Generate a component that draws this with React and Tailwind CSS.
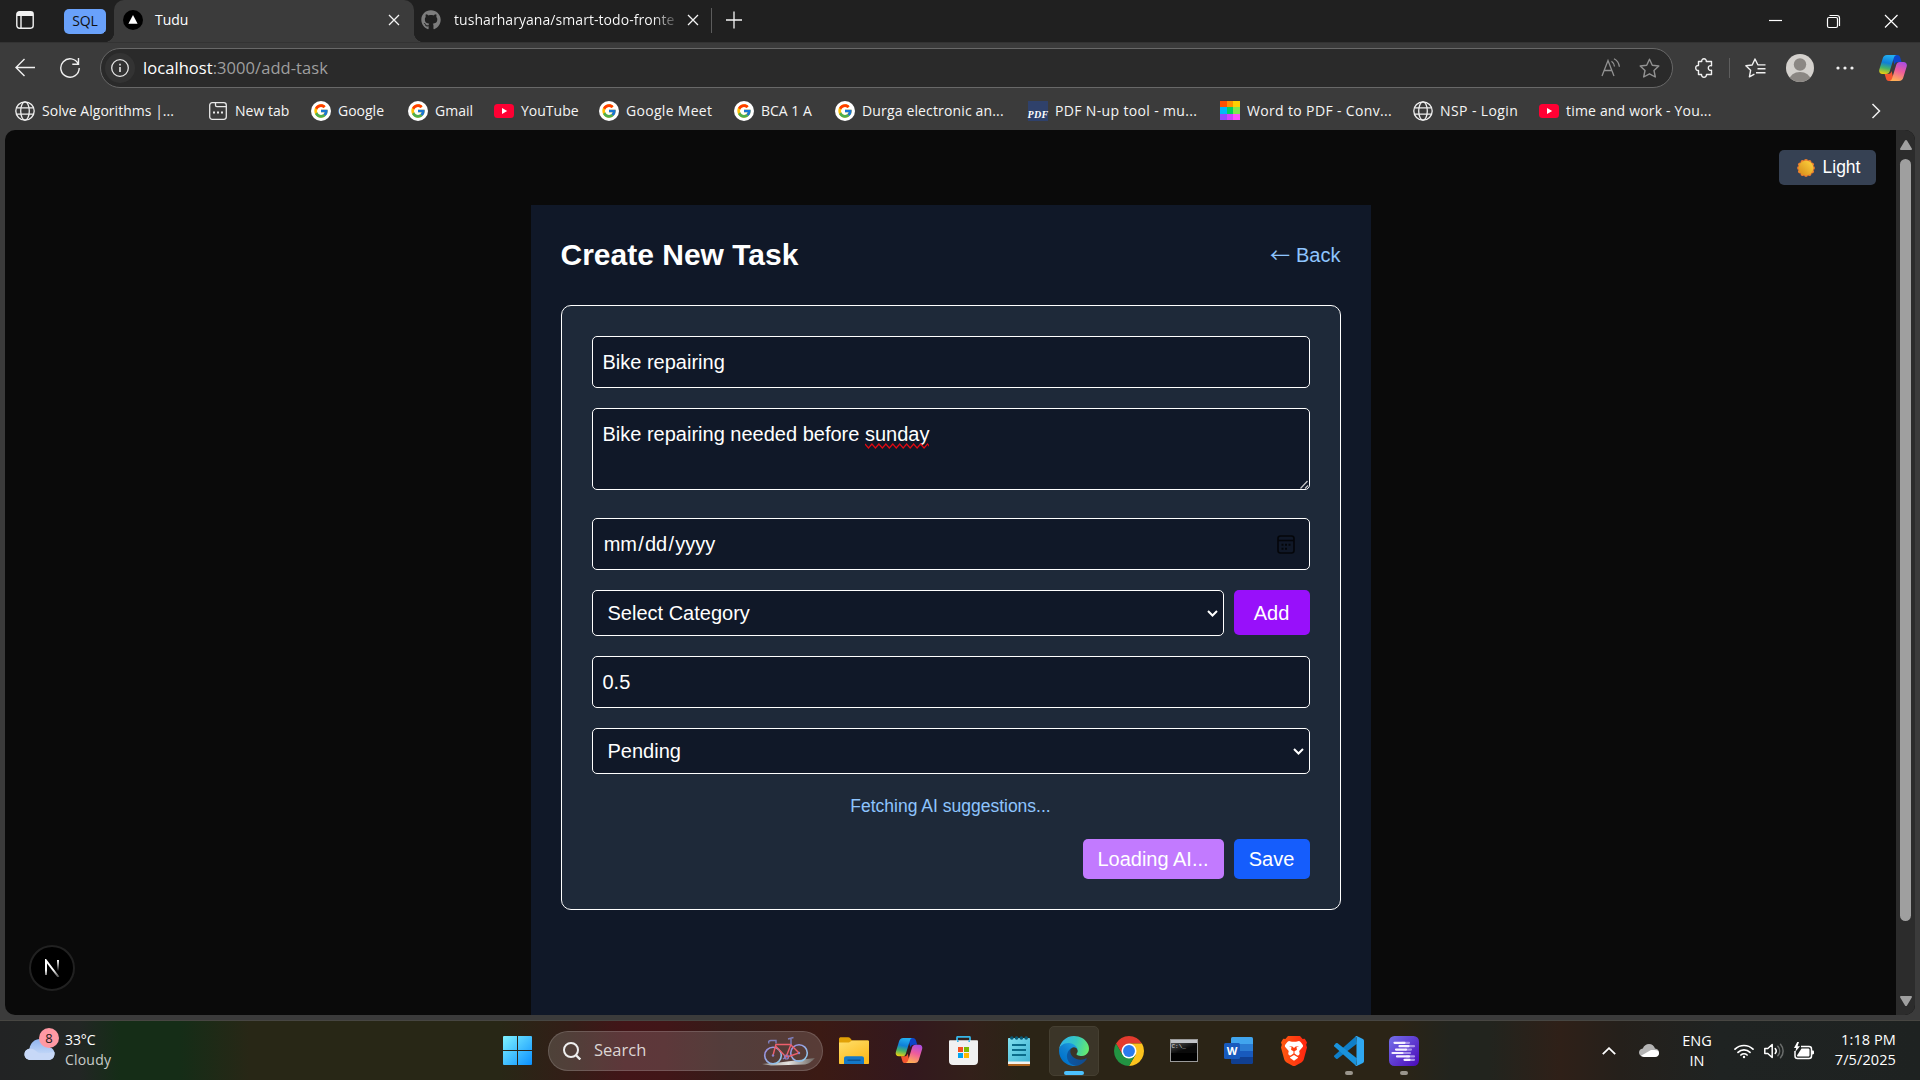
import React from "react";
import { FaGithub } from "react-icons/fa";
import { FcGoogle } from "react-icons/fc";

/* ---------- shared brand drawings ---------- */

function CopilotLogo({ id, className }) {
  return (
    <svg className={className} viewBox="0 0 28 26" fill="none">
      <defs>
        <linearGradient id={id + "a"} x1="8" y1="0" x2="4" y2="19" gradientUnits="userSpaceOnUse">
          <stop offset="0" stopColor="#22aef0" />
          <stop offset=".4" stopColor="#0f7fd8" />
          <stop offset=".68" stopColor="#45b36a" />
          <stop offset="1" stopColor="#f3cf0c" />
        </linearGradient>
        <linearGradient id={id + "b"} x1="24" y1="6" x2="17" y2="26" gradientUnits="userSpaceOnUse">
          <stop offset="0" stopColor="#a24bea" />
          <stop offset=".5" stopColor="#ee5c9c" />
          <stop offset="1" stopColor="#ffb055" />
        </linearGradient>
      </defs>
      <path d="M13 0h5.2c1.6 0 2.6 1 3 2.4L22.600 7H19c-2.200 0-3 1-3.600 3z" fill="#0d45c9" />
      <path d="M15 26H9.800c-1.600 0-2.400-1-2.800-2.400L5.600 19H9c2.200 0 3-1 3.600-3z" fill="#f4552f" />
      <path d="M8 0h9.500c-1.500.3-2.200 1.500-2.700 3l-4 13c-.6 2-1.700 3-3.800 3H3.500C.8 19-.3 17 .3 14.500L3.700 3.400C4.300 1.300 5.600 0 8 0z" fill={`url(#${id}a)`} />
      <path d="M20 26h-9.500c1.500-.3 2.200-1.500 2.700-3l4-13c.6-2 1.700-3 3.800-3h3.500c2.700 0 3.800 2 3.200 4.500l-3.400 11.100C23.700 24.700 22.400 26 20 26z" fill={`url(#${id}b)`} />
    </svg>
  );
}

function GoogleIcon() {
  return (
    <span className="flex size-5 items-center justify-center rounded-full bg-white">
      <FcGoogle size={16} />
    </span>
  );
}

function GlobeIcon() {
  return (
    <svg className="size-5" viewBox="0 0 20 20" fill="none" stroke="#f0f0f0" strokeWidth="1.300">
      <circle cx="10" cy="10" r="9.200" />
      <ellipse cx="10" cy="10" rx="4.300" ry="9.200" />
      <path d="M1.600 6.800h16.800M1.600 13.200h16.800" />
    </svg>
  );
}

function NewTabIcon() {
  return (
    <svg className="size-5" viewBox="0 0 20 20" fill="none" stroke="#e8e8e8" strokeWidth="1.300">
      <rect x="1.700" y="1.700" width="16.600" height="16.600" rx="2.500" />
      <path d="M7.500 1.700v2.600c0 .9.500 1.400 1.400 1.400h9.400" />
      <path d="M5 11.500h2M9 11.500h2M13 11.500h2" strokeWidth="2" />
    </svg>
  );
}

function YouTubeIcon() {
  return (
    <span className="flex h-5 w-5 items-center">
      <svg className="h-3.5 w-5" viewBox="0 0 20 14">
        <rect width="20" height="14" rx="3.500" fill="#ff0033" />
        <path d="M8 4l5.200 3L8 10z" fill="#fff" />
      </svg>
    </span>
  );
}

function PdfIcon() {
  return (
    <span className="flex size-5 items-end justify-center bg-[#2f416b] font-['Liberation_Serif',serif] text-[10px] leading-[12px] font-bold text-white italic">
      PDF
    </span>
  );
}

function RainbowIcon() {
  return (
    <span className="grid size-5 grid-cols-3 grid-rows-3">
      <i className="bg-[#ff5000]" /><i className="bg-[#ff9000]" /><i className="bg-[#ffd000]" />
      <i className="bg-[#00b8f8]" /><i className="bg-[#00d060]" /><i className="bg-[#80e850]" />
      <i className="bg-[#9048ff]" /><i className="bg-[#d040ff]" /><i className="bg-[#ff50ff]" />
    </span>
  );
}

/* ---------- browser chrome ---------- */

function CloseGlyph({ className }) {
  return (
    <svg className={className} viewBox="0 0 12 12" stroke="#f5f5f5" strokeWidth="1.300">
      <path d="M1 1l10 10M11 1L1 11" />
    </svg>
  );
}

function TabStrip() {
  return (
    <div className="flex h-[42px] items-stretch bg-[#202020] text-white">
      <div className="flex w-[114px] items-center rounded-br-[10px] bg-[#202020] pb-[2px]">
        <svg className="ml-4 h-[18px] w-[18px]" viewBox="0 0 18 18" fill="none" stroke="#f2f2f2" strokeWidth="1.400">
          <rect x=".8" y=".8" width="16.400" height="16.400" rx="2.600" />
          <path d="M1 3h16" strokeWidth="4" />
          <path d="M5 4v13" />
        </svg>
        <span className="mt-[2px] ml-[30px] flex h-[25px] w-[42px] items-center justify-center rounded-[5px] bg-[#69a1fa] pb-px text-[14px] tracking-[-0.2px] text-[#101010]">
          SQL
        </span>
      </div>
      <div className="relative flex w-[300px] items-center rounded-t-[10px] bg-[#3b3b3b] pb-[2px]">
        <span className="absolute bottom-0 -left-2.5 size-2.5 bg-[radial-gradient(circle_at_0_0,#202020_10px,#3b3b3b_10.5px)]" />
        <span className="absolute -right-2.5 bottom-0 size-2.5 bg-[radial-gradient(circle_at_100%_0,#202020_10px,#3b3b3b_10.5px)]" />
        <svg className="ml-[9px] size-5" viewBox="0 0 20 20">
          <circle cx="10" cy="10" r="10" fill="#000" />
          <path d="M10 5l4.600 8.800H5.400z" fill="#fff" />
        </svg>
        <span className="ml-3 flex-1 text-[14px] leading-5">Tudu</span>
        <CloseGlyph className="mr-[14px] size-3" />
      </div>
      <div className="flex w-[298px] items-center pb-[2px]">
        <FaGithub className="ml-[7px]" size={20} color="#7d7d7d" />
        <span className="ml-[13px] w-[224px] bg-[linear-gradient(90deg,#fff_198px,#3a3a3a_224px)] bg-clip-text text-[14px] leading-5 tracking-[0.060px] whitespace-nowrap text-transparent">
          tusharharyana/smart-todo-fronte
        </span>
        <CloseGlyph className="ml-[9px] size-3" />
        <span className="ml-[12px] h-[25px] w-px bg-[#5c5c5c]" />
      </div>
      <svg className="ml-[14px] w-4" viewBox="0 0 16 42" stroke="#f5f5f5" strokeWidth="1.300">
        <path d="M8 11.500v17M-.5 20h17" />
      </svg>
      <div className="ml-auto flex items-center">
        <svg className="h-[42px] w-[174px]" viewBox="0 0 174 42" fill="none" stroke="#fff" strokeWidth="1.200">
          <path d="M23 20.500h13" />
          <rect x="81.500" y="17.500" width="10" height="10" rx="1.500" />
          <path d="M83.500 15.500h7.500c1.500 0 2.500 1 2.500 2.500v8" />
          <path d="M139 15l12.500 12.500M151.500 15L139 27.500" />
        </svg>
      </div>
    </div>
  );
}

function AddressRow() {
  return (
    <div className="flex h-[52px] items-center border-t border-[#333] pb-px text-white">
      <svg className="ml-[15px] size-5" viewBox="0 0 20 20" fill="none" stroke="#f0f0f0" strokeWidth="1.400">
        <path d="M20 9.500H1M9.500 1L1 9.500 9.500 18" />
      </svg>
      <svg className="ml-[25px] size-5" viewBox="0 0 20 20" fill="none" stroke="#f0f0f0" strokeWidth="1.400">
        <path d="M18.300 6A9.200 9.200 0 1 0 19.200 10M18.500 0v6.200h-6.200" />
      </svg>
      <div className="ml-[20px] flex h-10 w-[1573px] items-center rounded-full border border-[#686868] bg-[#2a2a2a]">
        <span className="ml-[4px] flex size-[30px] items-center justify-center rounded-full bg-[#333]">
          <svg className="size-[18px]" viewBox="0 0 18 18" fill="none" stroke="#e6e6e6" strokeWidth="1.300">
            <circle cx="9" cy="9" r="8.300" />
            <path d="M9 8v5M9 4.800v1.600" strokeWidth="1.600" />
          </svg>
        </span>
        <span className="ml-2 flex-1 text-[16.500px] leading-6 tracking-[0.060px] text-[#9f9f9f]">
          <span className="text-white">localhost</span>:3000/add-task
        </span>
        <svg className="h-5 w-5" viewBox="0 0 20 20" fill="none" stroke="#929292" strokeWidth="1.300">
          <path d="M1 18L7 2.500 13 18M3.200 12.500h7.700M10.500 3.200c1.800 1.200 2.800 3 3 5.300M13 .8c3 1.600 5 4.500 5.400 8" />
        </svg>
        <svg className="mr-3 ml-[18px] size-[21px]" viewBox="0 0 21 21" fill="none" stroke="#929292" strokeWidth="1.400" strokeLinejoin="round">
          <path d="M10.500 1.200l2.800 6 6.500.8-4.800 4.500 1.300 6.500-5.800-3.200L4.700 19 6 12.500 1.200 8l6.500-.8z" />
        </svg>
      </div>
      <svg className="ml-[21px] h-5 w-5" viewBox="0 0 20 20" fill="none" stroke="#f0f0f0" strokeWidth="1.400" strokeLinejoin="round">
        <path d="M4.500 3.500h3.200C7.500 2 8.500.8 10 .8s2.500 1.200 2.300 2.700h5.200v4.300c-1.700-.6-3.200.5-3.200 2.200s1.500 2.800 3.200 2.200v4.300h-5c.1 1.600-1 2.700-2.500 2.700s-2.600-1.100-2.500-2.700h-3v-4c-1.600.2-2.800-.9-2.800-2.500S2.900 7.300 4.500 7.500z" />
      </svg>
      <span className="ml-[14.500px] h-5 w-px bg-[#5e5e5e]" />
      <svg className="ml-[15px] h-5 w-[21px]" viewBox="0 0 21 20" fill="none" stroke="#f0f0f0" strokeWidth="1.400" strokeLinejoin="round">
        <path d="M14.200 6.900L12.800 6.800 10 1 7.200 7 .9 7.800l4.700 4.500L4.400 18.900l5-2.700M12.500 10.700h8M11 14.700h9.500M13 6.900h7.500" />
      </svg>
      <svg className="ml-[20px] size-7" viewBox="0 0 28 28">
        <defs><clipPath id="avatarClip"><circle cx="14" cy="14" r="14" /></clipPath></defs>
        <circle cx="14" cy="14" r="14" fill="#d4d1cd" />
        <g clipPath="url(#avatarClip)" fill="#8b8783">
          <circle cx="14" cy="10.500" r="6.200" />
          <ellipse cx="14" cy="26" rx="10.500" ry="8" />
        </g>
      </svg>
      <svg className="ml-[22px] h-1 w-[18px]" viewBox="0 0 18 4" fill="#f0f0f0">
        <circle cx="2" cy="2" r="1.600" /><circle cx="9" cy="2" r="1.600" /><circle cx="16" cy="2" r="1.600" />
      </svg>
      <CopilotLogo id="cpTop" className="ml-[25px] h-[26px] w-7" />
    </div>
  );
}

function Bookmark({ width, icon, children, tracking = "" }) {
  return (
    <div className={`flex shrink-0 items-center gap-[7px] whitespace-nowrap ${width} ${tracking}`}>
      {icon}
      <span>{children}</span>
    </div>
  );
}

function BookmarksBar() {
  return (
    <div className="flex h-9 items-center pb-[3px] pl-[15px] text-[14px] leading-5 text-[#f5f5f5]">
      <Bookmark width="w-[193px]" icon={<GlobeIcon />} tracking="tracking-[0.030px]">Solve Algorithms |...</Bookmark>
      <Bookmark width="w-[103px]" icon={<NewTabIcon />}>New tab</Bookmark>
      <Bookmark width="w-[97px]" icon={<GoogleIcon />}>Google</Bookmark>
      <Bookmark width="w-[86px]" icon={<GoogleIcon />}>Gmail</Bookmark>
      <Bookmark width="w-[105px]" icon={<YouTubeIcon />}>YouTube</Bookmark>
      <Bookmark width="w-[135px]" icon={<GoogleIcon />} tracking="tracking-[0.3px]">Google Meet</Bookmark>
      <Bookmark width="w-[101px]" icon={<GoogleIcon />}>BCA 1 A</Bookmark>
      <Bookmark width="w-[193px]" icon={<GoogleIcon />} tracking="tracking-[0.15px]">Durga electronic an...</Bookmark>
      <Bookmark width="w-[192px]" icon={<PdfIcon />} tracking="tracking-[0.35px]">PDF N-up tool - mu...</Bookmark>
      <Bookmark width="w-[193px]" icon={<RainbowIcon />} tracking="tracking-[0.35px]">Word to PDF - Conv...</Bookmark>
      <Bookmark width="w-[126px]" icon={<GlobeIcon />} tracking="tracking-[0.4px]">NSP - Login</Bookmark>
      <Bookmark width="w-[200px]" icon={<YouTubeIcon />} tracking="tracking-[0.18px]">time and work - You...</Bookmark>
      <svg className="mr-[39px] ml-auto h-4 w-[10px]" viewBox="0 0 10 16" fill="none" stroke="#f0f0f0" strokeWidth="1.500">
        <path d="M1.500 1l7 7-7 7" />
      </svg>
    </div>
  );
}

/* ---------- page ---------- */

function SelectChevron() {
  return (
    <svg className="h-[7px] w-[11px]" viewBox="0 0 11 7" fill="none" stroke="#fff" strokeWidth="2">
      <path d="M1 1l4.500 4.500L10 1" />
    </svg>
  );
}

function SunEmoji() {
  const petals = Array.from({ length: 12 }, (_, i) => (i * Math.PI) / 6);
  return (
    <svg className="size-[18px]" viewBox="0 0 18 18">
      <defs>
        <linearGradient id="sun" x1="0" y1="1" x2="1" y2="0">
          <stop offset="0" stopColor="#d68a18" /><stop offset="1" stopColor="#ffd640" />
        </linearGradient>
      </defs>
      {petals.map((a) => (
        <circle key={a} cx={9 + 6.8 * Math.cos(a)} cy={9 + 6.8 * Math.sin(a)} r="2.100" fill="#f0802c" />
      ))}
      <circle cx="9" cy="9" r="7.300" fill="url(#sun)" />
    </svg>
  );
}

function TaskForm() {
  const field = "flex w-full items-center rounded-[5px] border border-white bg-gray-900";
  return (
    <div className="flex flex-col rounded-[10px] border border-white bg-gray-800 p-[30px]">
      <div className={`${field} h-[52px] px-[10px]`}>Bike repairing</div>
      <div className="relative mt-5 h-[82px] w-full rounded-[5px] border border-white bg-gray-900 px-[10px] py-[10px] leading-[30px]">
        Bike repairing needed before{" "}
        <span className="relative inline-block">
          sunday
          <svg className="absolute top-[24px] left-0 h-[6px] w-full" viewBox="0 0 65 6" preserveAspectRatio="none" fill="none" stroke="#e00a12" strokeWidth="1.200">
            <path d="M0 1l3.500 4L7 1l3.500 4L14 1l3.500 4L21 1l3.500 4L28 1l3.500 4L35 1l3.500 4L42 1l3.500 4L49 1l3.500 4L56 1l3.500 4L63 1l2 2.500" />
          </svg>
        </span>
        <svg className="absolute right-0 bottom-0 size-[9px]" viewBox="0 0 9 9" stroke="#c8c8c8" strokeWidth="1.200">
          <path d="M.5 8.500l7-7.500M5 8.500L8 5.500" />
        </svg>
      </div>
      <div className={`${field} mt-7 h-[52px] justify-between pr-[14px] pl-[10px]`}>
        <span className="flex">
          <span className="px-[1.200px]">mm</span>/<span className="px-[1.200px]">dd</span>/<span className="px-[1.200px]">yyyy</span>
        </span>
        <svg className="h-[19px] w-[18px]" viewBox="0 0 18 19" fill="none" stroke="#04060a" strokeWidth="1.600">
          <rect x="1" y="1" width="16" height="17" rx="2.500" />
          <path d="M1 5.500h16" />
          <path d="M4.500 9.800h2M8 9.800h2M11.500 9.800h2M4.500 13.800h2M8 13.800h2" strokeWidth="2" />
        </svg>
      </div>
      <div className="mt-5 flex gap-[10px]">
        <div className={`${field} h-[46px] flex-1 justify-between pr-[5px] pl-[15px]`}>
          Select Category
          <SelectChevron />
        </div>
        <button className="h-[45px] w-[76px] rounded-[5px] bg-purple-600">Add</button>
      </div>
      <div className={`${field} mt-5 h-[52px] px-[10px]`}>0.5</div>
      <div className={`${field} mt-5 h-[46px] justify-between pr-[5px] pl-[15px]`}>
        Pending
        <SelectChevron />
      </div>
      <p className="mt-5 text-center text-[17.500px] leading-[25px] text-blue-300">Fetching AI suggestions...</p>
      <div className="mt-5 flex justify-end gap-[10px]">
        <button className="h-10 w-[141px] rounded-[5px] bg-purple-400">Loading AI...</button>
        <button className="h-10 w-[76px] rounded-[5px] bg-blue-600">Save</button>
      </div>
    </div>
  );
}

function Viewport() {
  return (
    <div className="mr-[5px] ml-[5px] flex h-[885px] overflow-hidden rounded-[10px] bg-[#0a0a0a] font-['Liberation_Sans',Arial,sans-serif]">
      <div className="relative flex flex-1 justify-center">
        <main className="mt-[75px] w-[840px] bg-gray-900 p-[30px] text-[20px] leading-[30px] text-white">
          <div className="mb-[30px] flex h-10 items-center justify-between">
            <h1 className="text-[30px] leading-[38px] font-bold">Create New Task</h1>
            <a className="flex h-[30px] items-center gap-[6px] text-blue-300">
              <span className="font-['Noto_Sans_CJK_JP',sans-serif] leading-[30px]">←</span>
              <span>Back</span>
            </a>
          </div>
          <TaskForm />
        </main>
        <button className="absolute top-5 right-5 flex h-[35px] w-[97px] items-center justify-center gap-[8px] rounded-[5px] bg-gray-700 pl-[2px] text-[17.500px] text-white">
          <SunEmoji />
          Light
        </button>
        <div className="absolute bottom-[24px] left-[24px] flex size-[46px] items-center justify-center rounded-full border-2 border-[#212121] bg-black">
          <svg className="h-[18px] w-4" viewBox="0 0 16 18" fill="none" strokeWidth="2">
            <defs>
              <linearGradient id="nDiag" x1="0" y1="0" x2="0" y2="18" gradientUnits="userSpaceOnUse">
                <stop offset=".6" stopColor="#fff" /><stop offset="1" stopColor="#fff" stopOpacity=".3" />
              </linearGradient>
              <linearGradient id="nStem" x1="0" y1="1" x2="0" y2="12" gradientUnits="userSpaceOnUse">
                <stop offset="0" stopColor="#fff" /><stop offset="1" stopColor="#fff" stopOpacity="0" />
              </linearGradient>
            </defs>
            <path d="M2 16V1.500L14.500 18" stroke="url(#nDiag)" />
            <path d="M13 1h2v11h-2z" fill="url(#nStem)" />
          </svg>
        </div>
      </div>
      <div className="flex w-[19px] flex-col items-center bg-[#2c2c2c]">
        <svg className="mt-[10px] h-[10px] w-3" viewBox="0 0 12 10" fill="#9f9f9f"><path d="M6 0c.5 0 .8.200 1 .6l4.800 8c.4.800.100 1.400-.8 1.400H1c-.9 0-1.200-.6-.8-1.400L5 .6c.2-.4.5-.6 1-.6z" /></svg>
        <span className="mt-[9px] h-[762px] w-[11px] rounded-full bg-[#9f9f9f]" />
        <svg className="mt-auto mb-[9px] h-[10px] w-3" viewBox="0 0 12 10" fill="#9f9f9f"><path d="M6 10c.5 0 .8-.2 1-.6l4.800-8C12.200.6 11.900 0 11 0H1C.1 0-.2.600.2 1.400l4.800 8c.2.400.5.600 1 .600z" /></svg>
      </div>
    </div>
  );
}

/* ---------- taskbar icons ---------- */

function Bicycle() {
  return (
    <svg className="h-[32px] w-[54px]" viewBox="0 0 54 32" fill="none">
      <defs>
        <linearGradient id="road" x1="0" x2="1"><stop offset="0" stopColor="#9a9590" /><stop offset=".5" stopColor="#e4e2df" /><stop offset="1" stopColor="#6b6460" /></linearGradient>
        <linearGradient id="wheel" x1="0" y1="0" x2="1" y2="1"><stop offset="0" stopColor="#9a86dc" /><stop offset="1" stopColor="#8fd0ee" /></linearGradient>
      </defs>
      <path d="M0 29l17-1.500L53 23c-3 3-5 5.500-10 6.500L9 30.500z" fill="url(#road)" />
      <circle cx="11" cy="20.500" r="8.300" stroke="url(#wheel)" strokeWidth="1.600" />
      <circle cx="37" cy="18" r="8.300" stroke="url(#wheel)" strokeWidth="1.600" />
      <path d="M11 20.500l3-11.500M13.500 11L24 22l5-12.500H14M29 10l8 8-12 4" stroke="#ee5f6c" strokeWidth="1.400" />
      <path d="M7 8.500c-1-2 0-3 2-3h5v3M29 9.500V3M26 4l5.500-1.500M24 22l-3 2" stroke="#7f80bd" strokeWidth="1.400" />
      <circle cx="24.500" cy="22" r="2" stroke="#8b80c8" strokeWidth="1.200" />
      <circle cx="11" cy="20.500" r="1.200" fill="#8b80c8" />
      <circle cx="37" cy="18" r="1.200" fill="#8b80c8" />
    </svg>
  );
}

function ExplorerIcon() {
  return (
    <svg className="h-[27px] w-[30px]" viewBox="0 0 30 27">
      <defs><linearGradient id="fold" x1="0" y1="0" x2=".6" y2="1"><stop offset="0" stopColor="#ffdf6b" /><stop offset="1" stopColor="#fdbb1e" /></linearGradient></defs>
      <path d="M0 2C0 .9.900.300 2 .300h7c1 0 1.800.4 2.500 1.200L13 3.400h15c1.200 0 2 .6 2 1.800V10H0z" fill="#e2a106" />
      <path d="M0 5.500h10l3-2.100h16c.6 0 1 .4 1 1V26c0 .6-.4 1-1 1H1c-.6 0-1-.4-1-1z" fill="url(#fold)" />
      <path d="M5 27v-5.500c0-1.300.9-2.200 2.200-2.200h15.600c1.300 0 2.200.9 2.200 2.200V27z" fill="#1478c8" />
      <path d="M8.500 23.200h13" stroke="#0b4e8a" strokeWidth="1.300" />
    </svg>
  );
}

function StoreIcon() {
  return (
    <svg className="h-[29px] w-[29px]" viewBox="0 0 29 29">
      <path d="M8 7V1.800C8 1.200 8.400.800 9 .800h11c.6 0 1 .4 1 1V7" stroke="#37b6e8" strokeWidth="1.800" fill="none" />
      <path d="M0 5.500C0 4.700.400 4.300 1.200 4.300h26.600c.8 0 1.200.4 1.200 1.200V25c0 2.500-1.500 4-4 4H4c-2.500 0-4-1.500-4-4z" fill="#f1f1f1" />
      <path d="M8 6V4.300h1.600V6M19.400 6V4.300H21V6" fill="#37b6e8" />
      <path d="M9 11h5v5H9z" fill="#f25022" /><path d="M15 11h5v5h-5z" fill="#7fba00" />
      <path d="M9 17h5v5H9z" fill="#00a4ef" /><path d="M15 17h5v5h-5z" fill="#ffb900" />
    </svg>
  );
}

function NotepadIcon() {
  return (
    <svg className="h-[30px] w-[22px]" viewBox="0 0 22 30">
      <defs><linearGradient id="note" x1="0" y1="0" x2="1" y2="1"><stop offset="0" stopColor="#7fe0ef" /><stop offset="1" stopColor="#3fb2d2" /></linearGradient></defs>
      <path d="M0 26h22v3c0 .6-.4 1-1 1H1c-.6 0-1-.4-1-1z" fill="#b0651e" />
      <path d="M0 3c0-.6.4-1 1-1h20c.6 0 1 .4 1 1v24H0z" fill="url(#note)" />
      <path d="M0 25.500h22V28H0z" fill="#f5f2ee" />
      <path d="M4 9h14M4 14h14M4 19h14" stroke="#0a6c8a" strokeWidth="1.800" />
      <g fill="#0a5a75"><circle cx="3.800" cy="2" r="1.800" /><circle cx="8.600" cy="2" r="1.800" /><circle cx="13.400" cy="2" r="1.800" /><circle cx="18.200" cy="2" r="1.800" /></g>
    </svg>
  );
}

function EdgeIcon() {
  return (
    <svg className="size-[30px]" viewBox="0 0 256 256">
      <defs>
        <linearGradient id="e1" x1="63" y1="177" x2="241" y2="177" gradientUnits="userSpaceOnUse"><stop offset="0" stopColor="#0c59a4" /><stop offset="1" stopColor="#114a8b" /></linearGradient>
        <linearGradient id="e2" x1="157" y1="95" x2="46" y2="222" gradientUnits="userSpaceOnUse"><stop offset="0" stopColor="#1b9de2" /><stop offset=".5" stopColor="#1080d0" /><stop offset="1" stopColor="#0074cc" /></linearGradient>
        <linearGradient id="e3" x1="20" y1="60" x2="250" y2="130" gradientUnits="userSpaceOnUse"><stop offset="0" stopColor="#2fb5e8" /><stop offset=".5" stopColor="#36c7c0" /><stop offset="1" stopColor="#66eb6e" /></linearGradient>
      </defs>
      <g transform="translate(-4.630 -4.920)">
        <path fill="url(#e1)" d="M235.680 195.460a93.730 93.730 0 0 1-10.540 4.710 101.870 101.870 0 0 1-35.900 6.460c-47.320 0-88.540-32.550-88.540-74.320A31.480 31.480 0 0 1 117.130 105c-42.800 1.800-53.800 46.400-53.800 72.530 0 73.880 68.090 81.370 82.760 81.370 7.910 0 19.840-2.300 27-4.560l1.310-.44a128.340 128.340 0 0 0 66.600-52.800 4 4 0 0 0-5.320-5.640z" />
        <path fill="url(#e2)" d="M110.340 246.340A79.200 79.200 0 0 1 87.600 225a80.720 80.720 0 0 1 29.530-120c3.120-1.470 8.450-4.130 15.540-4a32.350 32.350 0 0 1 25.690 13 31.880 31.880 0 0 1 6.360 18.660c0-.21 24.460-79.600-80-79.600-43.900 0-80 41.660-80 78.210a130.150 130.150 0 0 0 12.110 56 128 128 0 0 0 156.380 67.110 75.550 75.550 0 0 1-62.780-8z" />
        <path fill="url(#e3)" d="M156.940 153.780c-.81 1.050-3.300 2.500-3.300 5.660 0 2.610 1.700 5.120 4.720 7.230 14.380 10 41.490 8.680 41.560 8.680a59.560 59.560 0 0 0 30.270-8.350 61.380 61.380 0 0 0 30.430-52.880c.26-22.410-8-37.310-11.340-43.910C228.090 28.760 182.350 4.920 132.610 4.920a128 128 0 0 0-128 126.200c.48-36.540 36.800-66.050 80-66.050 3.500 0 23.460.34 42 10.070 16.340 8.580 24.900 18.940 30.850 29.210 6.180 10.670 7.280 24.150 7.280 29.520s-2.740 13.330-7.800 19.910z" />
      </g>
    </svg>
  );
}

function ChromeIcon() {
  return (
    <svg className="size-[30px]" viewBox="0 0 48 48">
      <path d="M24 12h20.780A24 24 0 0 0 3.220 12L13.600 30z" fill="#e33b2e" />
      <path d="M34.390 30L24 48A24 24 0 0 0 44.780 12H24z" fill="#fcc31e" />
      <path d="M13.610 30L3.220 12A24 24 0 0 0 24 48l10.390-18z" fill="#229342" />
      <circle cx="24" cy="24" r="12" fill="#fff" />
      <circle cx="24" cy="24" r="9.500" fill="#2a7bee" />
    </svg>
  );
}

function TerminalIcon() {
  return (
    <span className="flex h-[23px] w-[28px] flex-col border border-[#9a9a9a] bg-black">
      <span className="h-[3px] bg-[#c2c4c8]" />
      <span className="h-[10px] bg-linear-to-br from-[#555] to-[#0a0a0a] to-60% pl-px font-['Liberation_Mono',monospace] text-[6px] leading-[7px] text-[#ddd]">C:\_</span>
    </span>
  );
}

function WordIcon() {
  return (
    <span className="relative flex h-[27px] w-[29px] justify-end">
      <span className="flex h-full w-[22px] flex-col overflow-hidden rounded-[1.500px]">
        <i className="flex-1 bg-[#41a5ee]" /><i className="flex-1 bg-[#2b7cd3]" /><i className="flex-1 bg-[#185abd]" /><i className="flex-1 bg-[#103f91]" />
      </span>
      <span className="absolute top-[6px] left-0 flex size-[16px] items-center justify-center rounded-[1.500px] bg-[#185abd] text-[11px] font-bold text-white">W</span>
    </span>
  );
}

function BraveIcon() {
  return (
    <svg className="h-[30px] w-[26px]" viewBox="0 0 26 30">
      <defs><linearGradient id="brv" x1="0" x2="1"><stop offset="0" stopColor="#ff5a10" /><stop offset="1" stopColor="#ff2410" /></linearGradient></defs>
      <path d="M7 0h12l2.600 3 2.200-.2L26 6.500l-.8 2.300.8 2.700-3.200 11.800c-.4 1.400-1.200 2.400-2.400 3.200l-6 3.200c-.9.5-1.900.5-2.800 0l-6-3.200c-1.200-.8-2-1.800-2.400-3.200L0 11.500l.8-2.700L0 6.500l2.200-3.700 2.200.2z" fill="url(#brv)" />
      <path d="M8 5l3 .7h4L18 5c1 0 3.500 3.200 4 4.400.2 1-.4 1.600-1 2.400l-2.600 3c-.3.400-.2.900 0 1.400.4 1 .3 2-.5 2.800-.7.600-1.400.7-2 .3L13.500 17.500v-2.200l2.200-1.200c.3-.2.3-.6.100-1l-.3-1.800 2.700-1-3.500.2L13 12l-1.700-1.500-3.500-.2 2.700 1-.3 1.800c-.2.400-.2.8.1 1l2.200 1.200v2.200L10 19.300c-.6.400-1.300.3-2-.3-.8-.8-.9-1.800-.5-2.800.2-.5.3-1 0-1.400l-2.600-3c-.6-.8-1.200-1.400-1-2.400C4.500 8.200 7 5 8 5z" fill="#fff" />
      <path d="M13 19l3.800 2.200c.3.200.3.400 0 .7L13 24.800l-3.800-2.900c-.3-.3-.3-.5 0-.7z" fill="#fff" />
    </svg>
  );
}

function VSCodeIcon() {
  return (
    <svg className="size-[30px]" viewBox="0 0 100 100">
      <path d="M73 1L1 65c-1.500 1.500-1.500 3.500 0 5l6 5.500c1.500 1.300 3.500 1.300 5 .2L76 26z" fill="#0f7fc8" />
      <path d="M73 99L1 35c-1.500-1.500-1.500-3.500 0-5l6-5.500c1.500-1.300 3.500-1.300 5-.2L76 74z" fill="#1a93dc" />
      <path d="M71 99c2 1.200 4.500 1.200 6.500.2l19-9.200c2.200-1 3.500-3 3.500-5.500v-69c0-2.500-1.300-4.500-3.500-5.500l-19-9.200C75 0 73 0 71 1.500c2 0 4 1.500 4 4v89c0 2.500-2 4-4 4.500z" fill="#2fa8f2" />
    </svg>
  );
}

function PurpleLinesIcon() {
  return (
    <svg className="size-[30px]" viewBox="0 0 30 30">
      <defs><linearGradient id="prp" x1="0" y1="0" x2="1" y2="1"><stop offset="0" stopColor="#7470ea" /><stop offset="1" stopColor="#4a08b8" /></linearGradient></defs>
      <rect width="30" height="30" rx="5.500" fill="url(#prp)" />
      <g strokeWidth="2.200" strokeLinecap="round">
        <path d="M13 6.800h7M16 10.200h9M17 13.600h5M12 17h9M18 20.400h7M17 23.800h8" stroke="#a892ea" />
        <path d="M5.500 6.800h10M10.500 10.200h9M7 13.600h10M3.500 17h10M8 20.400h12M15.500 23.800h5" stroke="#f5f0ff" />
      </g>
    </svg>
  );
}

function TaskSlot({ children, active, running }) {
  return (
    <div className="flex h-full w-[55px] shrink-0 items-center justify-center">
      <div className={`relative flex h-[50px] w-[50px] items-center justify-center rounded-[5px] ${active ? "border border-[#453f31] bg-[#3b3528]" : ""}`}>
        {children}
        {active && <span className="absolute bottom-0 h-1 w-5 rounded-full bg-[#4cc2ff]" />}
        {running && <span className="absolute bottom-px h-1 w-2 rounded-full bg-[#9a958c]" />}
      </div>
    </div>
  );
}

function Taskbar() {
  return (
    <div className="flex h-[59px] items-center bg-[linear-gradient(90deg,#222324_0,#222624_80px,#152d17_120px,#152d17_180px,#282716_250px,#282716_500px,#331e17_570px,#421518_625px,#411618_665px,#351c19_730px,#3b1a14_820px,#33181e_910px,#33201a_970px,#2b2416_1020px,#2b2416_1400px,#22241e_1450px,#22241e_1490px,#2f2018_1560px,#25201b_1620px,#1f2322_1720px,#1e2221_1920px)] text-white">
      <div className="relative ml-[24px] w-8 pb-[6px]">
        <svg className="mt-[3px] h-[22px] w-[31px]" viewBox="0 0 31 22">
          <defs><linearGradient id="cld" x1="0" y1="0" x2="0" y2="1"><stop offset="0" stopColor="#8fb4f0" /><stop offset="1" stopColor="#d6e4fa" /></linearGradient></defs>
          <path d="M7 22c-4 0-6.500-2.500-6.500-5.800 0-3 2-5.200 5-5.700C6.500 5 10.500 1 16 1c5.500 0 9 3.500 10 8.500 2.800.8 4.500 3 4.500 6 0 3.800-2.500 6.500-6.500 6.500z" fill="url(#cld)" />
          <path d="M7 22c-4 0-6.500-2.500-6.500-5.500C.5 13 3 10.800 6.500 10.800c3.500 0 5 2.200 7 3.400 4 2 9 1 17-.2.5 5-2 8-6.500 8z" fill="#c7d8f7" />
        </svg>
        <span className="absolute -top-[7px] left-[15px] flex size-5 items-center justify-center rounded-full bg-[#ff99a4] pb-px text-[13px] leading-5 text-[#1a1a1a]">8</span>
      </div>
      <div className="ml-[9px] w-[100px] pb-[2px] text-[14px] leading-5">
        <div className="tracking-[-0.1px]">33°C</div>
        <div className="tracking-[0.2px] text-[#c8ccc8]">Cloudy</div>
      </div>
      <svg className="ml-[338px] size-[29px]" viewBox="0 0 29 29">
        <defs><linearGradient id="win" x1="0" y1="0" x2="29" y2="29" gradientUnits="userSpaceOnUse"><stop offset="0" stopColor="#7ff3ff" /><stop offset="1" stopColor="#0a90ff" /></linearGradient></defs>
        <path d="M0 1a1 1 0 0 1 1-1h13v14H0zM15 0h13a1 1 0 0 1 1 1v13H15zM0 15h14v14H1a1 1 0 0 1-1-1zM15 15h14v13a1 1 0 0 1-1 1H15z" fill="url(#win)" />
      </svg>
      <div className="ml-4 flex h-10 w-[275px] items-center rounded-full border border-white/15 bg-white/15 pl-[14px]">
        <svg className="size-[18px]" viewBox="0 0 18 18" fill="none" stroke="#eee" strokeWidth="2">
          <circle cx="8" cy="8" r="7" /><path d="M12.800 13l4.500 4.500" strokeWidth="2.400" />
        </svg>
        <span className="ml-[13px] flex-1 text-[16.500px] text-[#dcd6d4]">Search</span>
        <Bicycle />
        <span className="w-[6px]" />
      </div>
      <div className="ml-[3px] flex h-full">
        <TaskSlot><ExplorerIcon /></TaskSlot>
        <TaskSlot><CopilotLogo id="cpTask" className="h-[25px] w-7" /></TaskSlot>
        <TaskSlot><StoreIcon /></TaskSlot>
        <TaskSlot><NotepadIcon /></TaskSlot>
        <TaskSlot active><EdgeIcon /></TaskSlot>
        <TaskSlot><ChromeIcon /></TaskSlot>
        <TaskSlot><TerminalIcon /></TaskSlot>
        <TaskSlot><WordIcon /></TaskSlot>
        <TaskSlot><BraveIcon /></TaskSlot>
        <TaskSlot running><VSCodeIcon /></TaskSlot>
        <TaskSlot running><PurpleLinesIcon /></TaskSlot>
      </div>
      <div className="mr-[24px] ml-auto flex items-center text-[15px] leading-5">
        <svg className="h-2 w-[14px]" viewBox="0 0 14 8" fill="none" stroke="#fff" strokeWidth="1.800"><path d="M.8 7.200L7 1.200l6.200 6" /></svg>
        <svg className="ml-[23px] h-[13px] w-5" viewBox="0 0 20 13">
          <path d="M4.500 12.500C1.500 12.500 0 10.600 0 8.500c0-2.300 1.600-3.800 3.800-4C5 1.700 7.200 0 10 0c3 0 5.200 1.700 6 4.600 2.500.2 4 1.900 4 4.200 0 2.200-1.500 3.700-4 3.700z" fill="#b4b4b4" />
          <path d="M2 11.800L12 6l3.500 0c2.800 0 4.500 1 4.500 3.300 0 2.200-1.600 3.700-4 3.700H4.800C3.700 13 2.700 12.500 2 11.800z" fill="#fff" />
        </svg>
        <div className="ml-[17px] w-[42px] text-center text-[14.500px]">ENG<br />IN</div>
        <svg className="ml-[16px] h-4 w-5" viewBox="0 0 20 16" fill="none" stroke="#fff" strokeWidth="1.700" strokeLinecap="round">
          <path d="M1 6.200a12.800 12.800 0 0 1 18 0M4 9.300a8.500 8.500 0 0 1 12 0M6.900 12a4.500 4.500 0 0 1 6.200 0" />
          <circle cx="10" cy="14" r="1.200" fill="#fff" stroke="none" />
        </svg>
        <svg className="ml-[10px] h-4 w-5" viewBox="0 0 20 16" fill="none" stroke="#fff" strokeWidth="1.500" strokeLinejoin="round" strokeLinecap="round">
          <path d="M.8 5.500h3L8.200 1.500v13l-4.400-4h-3zM11.200 5.500c1.300 1.500 1.300 3.500 0 5" />
          <path d="M13.800 3.300c2.500 2.800 2.500 6.600 0 9.400M16.500 1.200c3.500 4 3.500 9.600 0 13.600" stroke="#6a6d6c" />
        </svg>
        <svg className="ml-[10px] h-[18px] w-5" viewBox="0 0 20 18">
          <path d="M7 4.500h8c1.700 0 2.500 1 2.500 2.500v7c0 1.500-.8 2.500-2.500 2.500H3.500C2 16.500 1 15.500 1 14V9" fill="none" stroke="#fff" strokeWidth="1.500" />
          <path d="M7.500 6.500H14c1 0 1.500.5 1.500 1.500v5c0 1-.5 1.500-1.500 1.500H4c-.6 0-1-.4-1-1z" fill="#fff" />
          <path d="M18 8.500h.8c.7 0 1.200.5 1.200 1.200v1.600c0 .7-.5 1.200-1.200 1.200H18z" fill="#fff" />
          <path d="M3.200 0L0 6h2.200L1.200 10 6 4.200H3.500L5 0z" fill="#fff" />
        </svg>
        <div className="ml-[20px] w-[62px] pb-[2px] text-right text-[14.500px] tracking-[0.1px] whitespace-nowrap">1:18 PM<br />7/5/2025</div>
      </div>
    </div>
  );
}

export default function App() {
  return (
    <div className="flex h-[1080px] w-[1920px] flex-col overflow-hidden bg-[#3b3b3b] font-['Open_Sans','Noto_Sans',sans-serif]">
      <TabStrip />
      <AddressRow />
      <BookmarksBar />
      <Viewport />
      <div className="h-[6px] shrink-0 border-b border-[#474642]" />
      <Taskbar />
    </div>
  );
}
